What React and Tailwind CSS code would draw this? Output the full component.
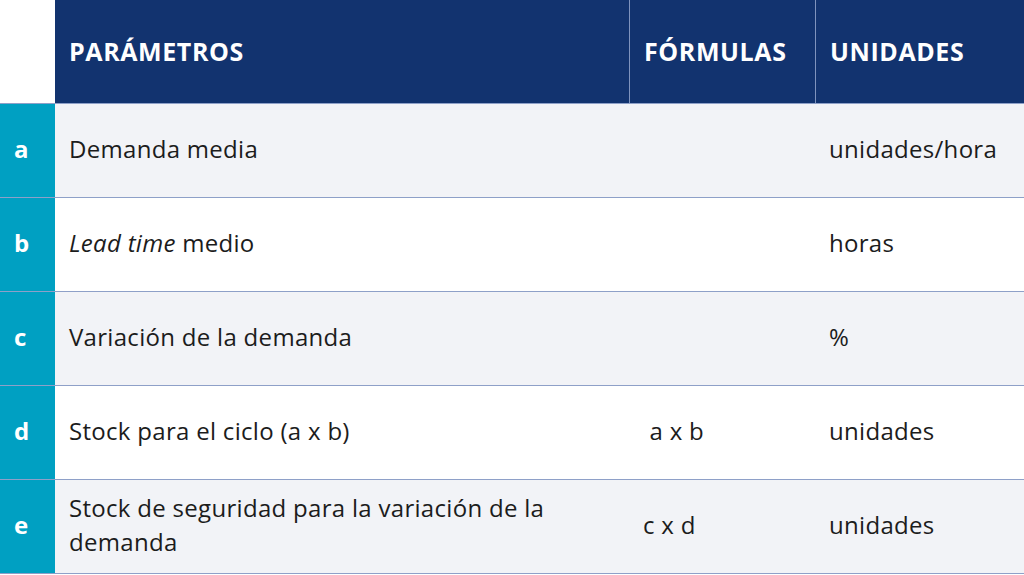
const rows = [
  { key: "a", param: "Demanda media", formula: "", unit: "unidades/hora", shade: true },
  { key: "b", param: <><i>Lead time</i> medio</>, formula: "", unit: "horas", shade: false },
  { key: "c", param: "Variación de la demanda", formula: "", unit: "%", shade: true },
  { key: "d", param: "Stock para el ciclo (a x b)", formula: "\u00a0a x b", unit: "unidades", shade: false },
  { key: "e", param: "Stock de seguridad para la variación de la demanda", formula: "c x d", unit: "unidades", shade: true },
];

export default function App() {
  return (
    <div className="w-[1024px] h-[575px] bg-white overflow-hidden text-[#1c1c1c]" style={{ fontFamily: "'Open Sans', Lato, sans-serif" }}>
      {/* header */}
      <div className="flex h-[103px]">
        <div className="w-[55px] shrink-0 bg-white" />
        <div className="flex flex-1 bg-[#12336f] text-white font-bold text-[25px] tracking-[0.6px]">
          <div className="w-[574px] flex items-center pl-[14px]">PARÁMETROS</div>
          <div className="w-[186px] flex items-center pl-[14px] border-l border-[#7f93bd]">FÓRMULAS</div>
          <div className="flex-1 flex items-center pl-[14px] border-l border-[#7f93bd]">UNIDADES</div>
        </div>
      </div>

      {rows.map((r) => (
        <div key={r.key} className={`flex h-[94px] border-t border-[#8ea0c8] text-[24px] tracking-[0.3px] ${r.shade ? "bg-[#f2f3f7]" : "bg-white"}`}>
          <div className="w-[55px] shrink-0 bg-[#00a0c2] text-white font-bold flex items-center pl-[14px] pb-[3px]">
            {r.key}
          </div>
          <div className="w-[574px] flex items-center px-[14px] pb-[3px] leading-[34px]">
            <span>{r.param}</span>
          </div>
          <div className="w-[186px] flex items-center px-[14px] pb-[3px]">
            <span>{r.formula}</span>
          </div>
          <div className="flex-1 flex items-center px-[14px] pb-[3px]">
            <span>{r.unit}</span>
          </div>
        </div>
      ))}
      <div className="border-t border-[#8ea0c8]" />
    </div>
  );
}
